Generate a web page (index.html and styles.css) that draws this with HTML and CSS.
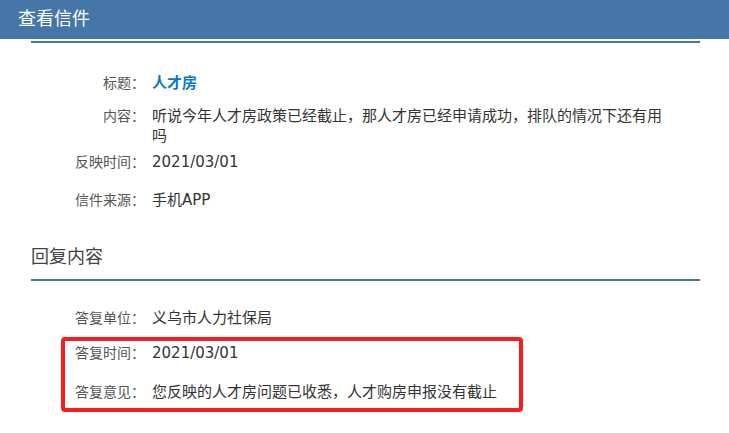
FILE: index.html
```html
<!DOCTYPE html>
<html lang="zh-CN">
<head>
    <meta charset="UTF-8">
    <meta name="viewport" content="width=device-width, initial-scale=1.0">
    <title>查看信件</title>
    <link rel="stylesheet" href="styles.css">
</head>
<body>
    <div class="header">
        <h1>查看信件</h1>
    </div>
    <div class="rule"></div>

    <div class="letter">
        <div class="row row-first">
            <span class="label">标题：</span>
            <span class="value title-link">人才房</span>
        </div>
        <div class="row row-content">
            <span class="label">内容：</span>
            <span class="value">听说今年人才房政策已经截止，那人才房已经申请成功，排队的情况下还有用吗</span>
        </div>
        <div class="row row-time">
            <span class="label">反映时间：</span>
            <span class="value">2021/03/01</span>
        </div>
        <div class="row row-source">
            <span class="label">信件来源：</span>
            <span class="value">手机APP</span>
        </div>
    </div>

    <h2 class="section-title">回复内容</h2>

    <div class="reply">
        <div class="row row-unit">
            <span class="label">答复单位：</span>
            <span class="value">义乌市人力社保局</span>
        </div>
        <div class="highlight">
            <div class="mark"></div>
            <div class="row row-reply-time">
                <span class="label">答复时间：</span>
                <span class="value">2021/03/01</span>
            </div>
            <div class="row row-opinion">
                <span class="label">答复意见：</span>
                <span class="value">您反映的人才房问题已收悉，人才购房申报没有截止</span>
            </div>
        </div>
    </div>
</body>
</html>
```

FILE: styles.css
```css
:root {
    --blue: #4576a8;
    --label: #555;
    --text: #333;
    --link: #0b78c6;
    --mark: #fa1c1c;
}

* {
    margin: 0;
    padding: 0;
    box-sizing: border-box;
}

html, body {
    min-height: 100%;
}

body {
    font-family: "DejaVu Sans", "Noto Sans CJK SC", sans-serif;
    background: #fff;
    color: var(--text);
    padding-bottom: 30px;
}

.header {
    height: 39px;
    background: var(--blue);
    padding-left: 18px;
}

.header h1 {
    font-size: 18px;
    font-weight: normal;
    line-height: 37px;
    color: #fff;
}

.rule {
    height: 2px;
    margin: 2px 29px 0 31px;
    background: var(--blue);
}

.row {
    display: flex;
    line-height: 20px;
    padding-right: 59px;
}

.label {
    flex: 0 0 145px;
    text-align: right;
    font-size: 14px;
    color: var(--label);
}

.value {
    flex: 1;
    margin-left: 7px;
    font-size: 15px;
    color: var(--text);
}

.title-link {
    color: var(--link);
    font-weight: bold;
}

/* spacing follows the original page, rows are not evenly spaced */
.row-first { margin-top: 30px; }
.row-content { margin-top: 13px; }
.row-time { margin-top: 6px; }
.row-source { margin-top: 18px; }

.section-title {
    margin: 35px 29px 0 31px;
    padding-bottom: 10px;
    font-size: 18px;
    font-weight: normal;
    line-height: 24px;
    color: #444;
    border-bottom: 2px solid var(--blue);
}

.row-unit { margin-top: 27px; }
.row-reply-time { margin-top: 15px; }
.row-opinion { margin-top: 19px; }

.highlight {
    position: relative;
}

.mark {
    position: absolute;
    left: 61px;
    top: -6px;
    width: 462px;
    height: 75px;
    border: 4px solid var(--mark);
    border-radius: 4px;
    pointer-events: none;
}
```
